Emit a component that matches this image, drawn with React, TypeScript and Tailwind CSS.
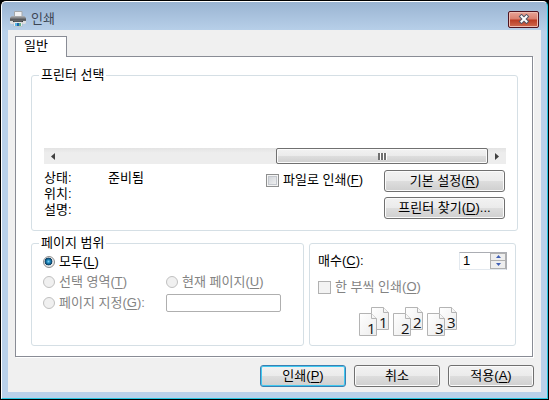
import { useState } from 'react';
import type { ReactNode } from 'react';
import clsx from 'clsx';

const buttonFace =
  'border border-[#707070] bg-[linear-gradient(#f2f2f2,#ebebeb_48%,#dddddd_52%,#cfcfcf)] shadow-[inset_0_0_0_1px_#fbfbfb]';

// Access key letter, underlined in parentheses
function Key({ children }: { children: string }) {
  return (
    <>
      (<span className="underline underline-offset-2">{children}</span>)
    </>
  );
}

function Button({
  children,
  className,
  primary = false,
}: {
  children: ReactNode;
  className?: string;
  primary?: boolean;
}) {
  return (
    <button
      type="button"
      className={clsx(
        'flex h-[22px] items-center justify-center rounded-[3px] leading-4',
        primary
          ? 'border border-[#3c7fb1] bg-[linear-gradient(#f2f2f2,#ebebeb_48%,#dddddd_52%,#cfcfcf)] shadow-[inset_0_0_0_1px_#40c8f0]'
          : buttonFace,
        className,
      )}
    >
      <span>{children}</span>
    </button>
  );
}

function Checkbox({
  id,
  disabled = false,
  children,
}: {
  id: string;
  disabled?: boolean;
  children: ReactNode;
}) {
  return (
    <div className="flex items-center gap-1">
      <input
        id={id}
        type="checkbox"
        disabled={disabled}
        className="size-[13px] shrink-0 appearance-none border border-[#8e8f8f] bg-[linear-gradient(135deg,#cbcfd5,#f6f6f6)] shadow-[inset_0_0_0_1px_#f4f4f4,inset_0_0_0_2px_#c4c8ce] disabled:border-[#b1b1b1] disabled:bg-none disabled:bg-[#f3f3f3] disabled:shadow-none"
      />
      <label htmlFor={id} className={clsx(disabled && 'text-[#838383]')}>
        {children}
      </label>
    </div>
  );
}

function Radio({
  id,
  checked,
  disabled = false,
  onChange,
  children,
}: {
  id: string;
  checked: boolean;
  disabled?: boolean;
  onChange: (id: string) => void;
  children: ReactNode;
}) {
  return (
    <div className="flex items-center gap-1">
      <input
        id={id}
        type="radio"
        name="range"
        checked={checked}
        disabled={disabled}
        onChange={() => onChange(id)}
        className="size-3 shrink-0 appearance-none rounded-full border border-[#8e8f8f] bg-[#f0f0f0] checked:bg-[radial-gradient(circle_at_45%_45%,#7fd3f5_0,#1c87bd_22%,#0b3b5e_46%,#e8e8e8_54%)] disabled:border-[#c0c0c0]"
      />
      <label htmlFor={id} className={clsx(disabled && 'text-[#838383]')}>
        {children}
      </label>
    </div>
  );
}

function PrinterIcon() {
  return (
    <svg width="16" height="16" viewBox="0 0 16 16" aria-hidden="true">
      <defs>
        <linearGradient id="printer-body" x1="0" y1="0" x2="0" y2="1">
          <stop offset="0" stopColor="#b4b6b8" />
          <stop offset="0.6" stopColor="#55575a" />
          <stop offset="1" stopColor="#77797b" />
        </linearGradient>
      </defs>
      <path d="M4.5.5h7.500V6H4.500z" fill="#f1f2f3" stroke="#a4a8ab" />
      <path d="M1.500 5h13L16 7v4H0V7z" fill="url(#printer-body)" />
      <path d="M0 10h16v2l-1 1H1l-1-1z" fill="#dcdee0" />
      <path d="M3 10h10v1H3z" fill="#3a3c3e" />
      <path d="M4 11h8v4.500H4z" fill="#fff" stroke="#a5a9ac" strokeWidth="0.5" />
      <path d="M5 12h2v3H5z" fill="#59b6e6" />
      <path d="M7 12h2v3H7z" fill="#2464a8" />
      <path d="M9 12h2v3H9z" fill="#63b18c" />
    </svg>
  );
}

function CloseIcon() {
  return (
    <svg width="12" height="10" viewBox="0 0 12 10" aria-hidden="true">
      <path d="M3.500 2.500l5 5M8.500 2.500l-5 5" stroke="#535666" strokeWidth="4" strokeLinecap="square" />
      <path d="M3.500 2.500l5 5M8.500 2.500l-5 5" stroke="#fff" strokeWidth="2" strokeLinecap="square" />
    </svg>
  );
}

// Two overlapping sheets carrying the same page number
function PagePair({ page }: { page: number }) {
  return (
    <svg width="31" height="30" viewBox="0 0 31 30" aria-hidden="true">
      <defs>
        <linearGradient id={`sheet${page}`} x1="0" y1="0" x2="1" y2="1">
          <stop offset="0" stopColor="#fff" />
          <stop offset="1" stopColor="#ececec" />
        </linearGradient>
      </defs>
      <g fill={`url(#sheet${page})`} stroke="#b4b4b4">
        <path d="M12.5.5h12l5 5v17h-17z" />
        <path d="M24.5.5v5h5" />
        <path d="M.5 6.500h12l5 5v17H.5z" />
        <path d="M12.500 6.500v5h5" />
      </g>
      <g fill="#111" fontFamily="Open Sans, sans-serif" fontSize="15">
        <text x="20" y="21">{page}</text>
        <text x="8" y="27">{page}</text>
      </g>
    </svg>
  );
}

const groupBox = 'min-w-0 rounded-[3px] border border-[#d5dfe5]';

export default function App() {
  const [range, setRange] = useState('all');
  const [copies, setCopies] = useState(1);

  return (
    <div className="flex min-h-screen flex-col border border-black bg-black font-['Liberation_Sans','Noto_Sans_CJK_KR',sans-serif] text-[13px] leading-4 text-black">
      <div className="flex flex-1 flex-col rounded-t-[5px] border border-t-white border-r-[#27c5e0] border-b-[#27c5e0] border-l-white bg-[linear-gradient(#9ab4d2,#b9d1ea_30px)] px-[6px] pb-[6px]">
        {/* Title bar */}
        <header className="flex h-7 items-center gap-[5px] pt-[6px] pr-[2px] pl-[2px]">
          <PrinterIcon />
          <h1 className="flex-1 text-[#3c4654]">인쇄</h1>
          <button
            type="button"
            aria-label="닫기"
            className="flex h-[17px] w-[31px] items-center justify-center rounded-[2px] border border-[#4f1420] bg-[linear-gradient(#e8a497,#d97e6d_48%,#b93a22_52%,#cf6a50)] shadow-[inset_0_0_0_1px_#eebbb0]"
          >
            <CloseIcon />
          </button>
        </header>

        <main className="flex flex-1 flex-col bg-[#f0f0f0] px-[7px] pt-[6px] pb-[3px]">
          {/* Tabs */}
          <div role="tablist" className="flex">
            <button
              type="button"
              role="tab"
              aria-selected="true"
              className="relative -mb-px h-[21px] w-[52px] border border-b-0 border-[#898c95] bg-white pr-2.5 pb-0.5 text-center"
            >
              일반
            </button>
          </div>

          <div
            role="tabpanel"
            className="mr-px border border-[#898c95] bg-white py-[10px] pr-[14px] pl-[15px] shadow-[1px_1px_0_#fff]"
          >
            {/* Printer selection */}
            <fieldset className={clsx(groupBox, 'px-3 pb-[11px]')}>
              <legend className="-ml-[5px] px-0.5">프린터 선택</legend>

              <div className="h-[65px]" />
              <div
                role="scrollbar"
                aria-orientation="horizontal"
                aria-controls="printers"
                aria-valuenow={100}
                className="-mr-px flex h-4 bg-[linear-gradient(#e3e3e3,#ededed_30%,#ededed)]"
              >
                <button type="button" aria-label="왼쪽" className="flex w-[17px] items-center justify-center">
                  <svg width="4" height="7" viewBox="0 0 4 7" aria-hidden="true">
                    <path d="M4 0v7L0 3.500z" fill="#404040" />
                  </svg>
                </button>
                <div className="flex-1" id="printers" />
                <div className={clsx('flex w-[212px] items-center justify-center rounded-[2px]', buttonFace)}>
                  <span className="h-[7px] w-[3px] border-r border-white bg-[#707070]" />
                  <span className="h-[7px] w-[3px] border-r border-white bg-[#707070]" />
                  <span className="h-[7px] w-[3px] border-r border-white bg-[#707070]" />
                </div>
                <button type="button" aria-label="오른쪽" className="flex w-[18px] items-center justify-center">
                  <svg width="4" height="7" viewBox="0 0 4 7" aria-hidden="true">
                    <path d="M0 0v7L4 3.500z" fill="#404040" />
                  </svg>
                </button>
              </div>

              <div className="flex items-start pt-[6px]">
                <dl className="grid flex-1 grid-cols-[64px_1fr]">
                  <dt>상태:</dt>
                  <dd>준비됨</dd>
                  <dt>위치:</dt>
                  <dd />
                  <dt>설명:</dt>
                  <dd />
                </dl>
                <div className="w-[118px] pt-0.5">
                  <Checkbox id="to-file">
                    파일로 인쇄<Key>F</Key>
                  </Checkbox>
                </div>
                <div className="flex w-[121px] flex-col gap-[5px]">
                  <Button>
                    기본 설정<Key>R</Key>
                  </Button>
                  <Button>
                    프린터 찾기<Key>D</Key>...
                  </Button>
                </div>
              </div>
            </fieldset>

            <div className="flex gap-[5px] pt-1 pr-[2px]">
              {/* Page range */}
              <fieldset className={clsx(groupBox, 'flex-1 px-[11px]')}>
                <legend className="-ml-1 px-0.5">페이지 범위</legend>
                <div className="grid grid-cols-[123px_1fr] items-center gap-y-1 pt-[3px]">
                  <div className="col-span-2">
                    <Radio id="all" checked={range === 'all'} onChange={setRange}>
                      모두<Key>L</Key>
                    </Radio>
                  </div>
                  <Radio id="selection" disabled checked={range === 'selection'} onChange={setRange}>
                    선택 영역<Key>T</Key>
                  </Radio>
                  <Radio id="current" disabled checked={range === 'current'} onChange={setRange}>
                    현재 페이지<Key>U</Key>
                  </Radio>
                  <Radio id="pages" disabled checked={range === 'pages'} onChange={setRange}>
                    페이지 지정<Key>G</Key>:
                  </Radio>
                  <input
                    type="text"
                    disabled
                    aria-label="페이지 지정"
                    className="h-[18px] w-[115px] rounded-[2px] border border-[#afafaf] bg-white px-1"
                  />
                </div>
              </fieldset>

              {/* Copies */}
              <fieldset className={clsx(groupBox, 'mt-2 h-[103px] w-[207px] px-2 pt-[7px]')}>
                <div className="flex h-[19px] items-center justify-between">
                  <label htmlFor="copies">
                    매수<Key>C</Key>:
                  </label>
                  <div className="flex h-[18px] w-12 border border-[#abadb3] border-b-[#e3e9ef] border-l-[#e3e9ef]">
                    <input
                      id="copies"
                      type="text"
                      value={copies}
                      onChange={(e) => setCopies(Number(e.target.value) || 1)}
                      className="w-[30px] min-w-0 bg-white pl-[3px] outline-none"
                    />
                    <div className="flex flex-1 flex-col border border-[#b0b0b0]">
                      <button
                        type="button"
                        aria-label="늘리기"
                        onClick={() => setCopies(copies + 1)}
                        className="flex flex-1 items-center justify-center border-b border-[#b0b0b0] bg-[#eeeeee]"
                      >
                        <svg width="5" height="3" viewBox="0 0 5 3" aria-hidden="true">
                          <path d="M0 3h5L2.500 0z" fill="#3f5fb5" />
                        </svg>
                      </button>
                      <button
                        type="button"
                        aria-label="줄이기"
                        onClick={() => setCopies(Math.max(1, copies - 1))}
                        className="flex flex-1 items-center justify-center bg-[#eeeeee]"
                      >
                        <svg width="5" height="3" viewBox="0 0 5 3" aria-hidden="true">
                          <path d="M0 0h5L2.500 3z" fill="#3f5fb5" />
                        </svg>
                      </button>
                    </div>
                  </div>
                </div>
                <div className="pt-[9px]">
                  <Checkbox id="collate" disabled>
                    한 부씩 인쇄<Key>O</Key>
                  </Checkbox>
                </div>
                <div className="flex justify-center gap-[3px] pt-3 pr-2">
                  <PagePair page={1} />
                  <PagePair page={2} />
                  <PagePair page={3} />
                </div>
              </fieldset>
            </div>
          </div>

          {/* Dialog buttons */}
          <footer className="flex justify-end gap-2 pt-2">
            <Button primary className="w-[86px]">
              인쇄<Key>P</Key>
            </Button>
            <Button className="w-[86px]">취소</Button>
            <Button className="w-[86px]">
              적용<Key>A</Key>
            </Button>
          </footer>
        </main>
      </div>
    </div>
  );
}
